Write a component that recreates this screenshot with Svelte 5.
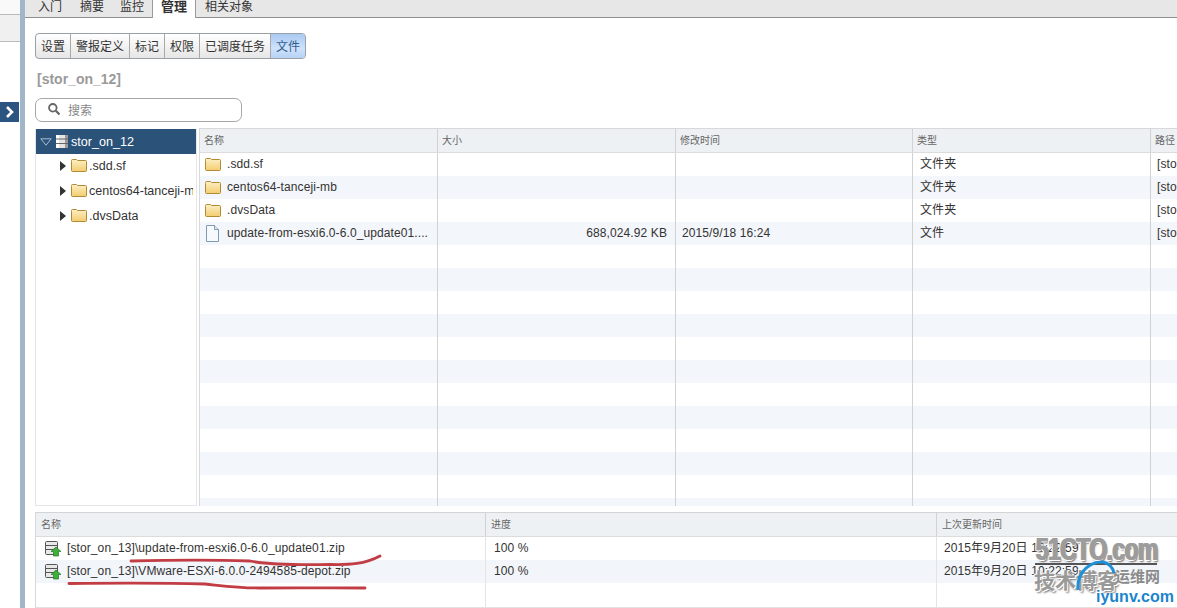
<script>
  const tabs = [
    { label: '入门' }, { label: '摘要' }, { label: '监控' },
    { label: '管理', active: true }, { label: '相关对象' }
  ];
  const segs = ['设置', '警报定义', '标记', '权限', '已调度任务', '文件'];
  const tree = ['.sdd.sf', 'centos64-tanceji-mb', '.dvsData'];
  const files = [
    { name: '.sdd.sf', size: '', time: '', type: '文件夹', folder: true },
    { name: 'centos64-tanceji-mb', size: '', time: '', type: '文件夹', folder: true },
    { name: '.dvsData', size: '', time: '', type: '文件夹', folder: true },
    { name: 'update-from-esxi6.0-6.0_update01....', size: '688,024.92 KB', time: '2015/9/18 16:24', type: '文件', folder: false }
  ];
  const rows = Array.from({ length: 16 }, (_, i) => files[i] ?? null);
  const tasks = [
    '[stor_on_13]\\update-from-esxi6.0-6.0_update01.zip',
    '[stor_on_13]\\VMware-ESXi-6.0.0-2494585-depot.zip'
  ];
</script>

{#snippet folder()}
  <svg class="ico" width="18" height="15" viewBox="0 0 18 15">
    <defs><linearGradient id="fg" x1="0" y1="0" x2="0" y2="1"><stop offset="0" stop-color="#fdf0c4"/><stop offset="1" stop-color="#f3cd70"/></linearGradient></defs>
    <path d="M1.5 3.5 V12.5 Q1.5 13.5 2.5 13.5 H15.5 Q16.5 13.5 16.5 12.5 V3.5 Q16.5 2.5 15.5 2.5 H7.5 L6.5 1.5 H2.5 Q1.5 1.5 1.5 2.5 Z" fill="url(#fg)" stroke="#b08a34"/>
  </svg>
{/snippet}

{#snippet fileIcon()}
  <svg class="ico" width="18" height="17" viewBox="0 0 18 17">
    <path d="M2.5 .5 H10.5 L14.5 4.5 V16.5 H2.5 Z" fill="#f7fafd" stroke="#7f9ab5"/>
    <path d="M10.5 .5 V4.5 H14.5" fill="#dfe8f1" stroke="#7f9ab5"/>
  </svg>
{/snippet}

{#snippet taskIcon()}
  <svg class="ico" width="18" height="17" viewBox="0 0 18 17">
    <rect x="1.5" y="1.5" width="12" height="13" rx="1" fill="#e8e8e8" stroke="#555"/>
    <path d="M2 5.5 H13 M2 9.5 H13" stroke="#555"/>
    <path d="M12 7 L17 11.500 H14.500 V16 H9.500 V11.500 H7 Z" fill="#3fae3a" stroke="#1f7a22" stroke-width=".7"/>
  </svg>
{/snippet}

<div class="page">
  <aside class="rail">
    <div class="rail-top"></div>
    <div class="rail-mid"></div>
    <button class="expand" aria-label="展开">
      <svg width="10" height="12" viewBox="0 0 10 12"><path d="M2 1 L7 6 L2 11" fill="none" stroke="#fff" stroke-width="2.6"/></svg>
    </button>
  </aside>
  <div class="stripe"></div>

  <main class="main">
    <nav class="tabs">
      {#each tabs as t}
        <span class="tab" class:active={t.active}>{t.label}</span>
      {/each}
    </nav>

    <div class="content">
      <div class="segs">
        {#each segs as s, i}
          <span class="seg" class:on={i === 5}>{s}</span>
        {/each}
      </div>

      <h1 class="title">[stor_on_12]</h1>

      <div class="search">
        <svg width="14" height="14" viewBox="0 0 14 14"><circle cx="5.8" cy="5.8" r="3.8" fill="none" stroke="#666" stroke-width="1.8"/><path d="M8.8 8.8 L12.5 12.5" stroke="#666" stroke-width="2.2"/></svg>
        <span>搜索</span>
      </div>

      <div class="browser">
        <div class="tree">
          <div class="root">
            <svg width="12" height="8" viewBox="0 0 12 8"><path d="M.8 .8 H11.2 L6 7.2 Z" fill="none" stroke="#a9bdd2"/></svg>
            <svg width="14" height="15" viewBox="0 0 14 15">
              <rect x="1" y="1" width="12" height="13" fill="#e4e4e4"/>
              <rect x="1" y="1" width="3" height="13" fill="#fff"/>
              <rect x="10" y="1" width="3" height="13" fill="#9a9a9a"/>
              <path d="M1 5 H13 M1 9.5 H13" stroke="#666"/>
            </svg>
            <span>stor_on_12</span>
          </div>
          {#each tree as n}
            <div class="node">
              <svg class="arrow" width="6" height="10" viewBox="0 0 6 10"><path d="M0 0 L6 5 L0 10 Z" fill="#333"/></svg>
              {@render folder()}
              <span>{n}</span>
            </div>
          {/each}
        </div>

        <div class="table">
          <div class="thead">
            <div>名称</div><div>大小</div><div>修改时间</div><div>类型</div><div>路径</div>
          </div>
          <div class="tbody">
            {#each rows as r}
              <div class="row">
                <div class="namecell">
                  {#if r}
                    {#if r.folder}{@render folder()}{:else}{@render fileIcon()}{/if}
                    <span>{r.name}</span>
                  {/if}
                </div>
                <div class="size">{r?.size ?? ''}</div>
                <div>{r?.time ?? ''}</div>
                <div>{r?.type ?? ''}</div>
                <div>{r ? '[stor_on_12]' : ''}</div>
              </div>
            {/each}
          </div>
        </div>
      </div>

      <section class="tasks">
        <div class="thead2">
          <div>名称</div><div>进度</div><div>上次更新时间</div>
        </div>
        {#each tasks as t}
          <div class="trow">
            <div class="tname">{@render taskIcon()}<span>{t}</span></div>
            <div>100 %</div>
            <div>2015年9月20日 10:22:59</div>
          </div>
        {/each}
        <div class="trow filler"><div></div><div></div><div></div></div>
      </section>
    </div>
  </main>

  <svg class="ink" width="1177" height="608" viewBox="0 0 1177 608" aria-hidden="true">
    <path d="M131 561 C170 560 220 560 250 561 C270 565 300 565 330 564.500 C350 565 365 564 380 556" fill="none" stroke="#c23c44" stroke-width="2.800" stroke-linecap="round"/>
    <path d="M69 583.500 C110 583 170 583 205 584 C225 586 240 588 260 588 C300 588 335 587.500 365 588" fill="none" stroke="#c23c44" stroke-width="2.800" stroke-linecap="round"/>
  </svg>

  <div class="wm" aria-hidden="true">
    <div class="wm-a">51CTO.com</div>
    <div class="wm-bar"></div>
    <div class="wm-b">技术博客</div>
    <div class="wm-c">运维网</div>
    <svg class="wm-arc" width="60" height="50" viewBox="0 0 60 50"><path d="M5 32 C3 12 20 3 30 4 C36 5 40 10 41 15" fill="none" stroke="#1f8fd6" stroke-width="3"/></svg>
    <div class="wm-d">iyunv.com</div>
  </div>
</div>

<style>
  :global(body) { margin: 0; background: #fff; }
  .page {
    position: relative;
    display: flex;
    width: 1177px;
    height: 608px;
    overflow: hidden;
    font: 12px "Liberation Sans", "Noto Sans CJK SC", sans-serif;
    color: #333;
  }
  .rail { width: 20px; flex: none; background: #fff; }
  .rail-top { height: 14px; background: #f9f9f9; border-bottom: 1px solid #bbb; }
  .rail-mid { height: 26px; background: #f0f0f0; border-bottom: 1px solid #bbb; }
  .expand {
    display: flex; align-items: center; justify-content: center;
    width: 19px; height: 20px; margin-top: 60px; padding: 0;
    border: 0; background: #2b5580;
  }
  .stripe { width: 5px; flex: none; background: #a2b6ca; }
  .main { flex: 1; min-width: 0; display: flex; flex-direction: column; }

  .tabs {
    display: flex; height: 17px; flex: none;
    padding-left: 4px;
    background: #e7e7e7;
    border-bottom: 1px solid #8e8e8e;
  }
  .tab {
    padding: 0 9px;
    margin-top: -3px;
    line-height: 20px;
    font-size: 12px;
    white-space: nowrap;
  }
  .tab:nth-child(3) { margin-left: -2px; }
  .tab.active {
    margin: -3px 0 -1px -1px;
    padding: 0 8px;
    height: 21px;
    background: #fff;
    border-left: 1px solid #9a9a9a;
    border-right: 1px solid #9a9a9a;
    font-weight: bold;
    font-size: 13px;
  }
  .content { padding: 15px 0 0 10px; display: flex; flex-direction: column; align-items: flex-start; }

  .segs {
    display: flex; height: 24px;
    border: 1px solid #9aa0a6; border-radius: 4px;
    overflow: hidden;
    background: linear-gradient(#fff, #e6e6e6);
  }
  .seg { padding: 0 5px; line-height: 26px; border-left: 1px solid #a8a8a8; color: #333; white-space: nowrap; }
  .seg:first-child { border-left: 0; }
  .seg.on { background: linear-gradient(#a9c9f2, #cfe2fb 60%, #b6d2f6); color: #2f5f90; }

  .title { margin: 11px 0 0 2px; height: 18px; font-size: 14px; line-height: 18px; font-weight: bold; color: #9a9a9a; }

  .search {
    box-sizing: border-box;
    display: flex; align-items: center; gap: 7px;
    width: 207px; height: 24px; margin-top: 10px;
    padding: 0 0 2px 11px;
    border: 1px solid #a6a6a6; border-radius: 7px;
    color: #888;
  }

  .browser { display: flex; gap: 2px; margin-top: 6px; width: 1142px; height: 378px; }
  .tree {
    box-sizing: border-box;
    width: 162px; height: 377px; flex: none; margin-top: 1px; padding-left: 1px;
    border-right: 1px solid #e6e6e6; border-bottom: 1px solid #e6e6e6; border-left: 1px solid #e6e6e6;
    overflow: hidden;
  }
  .root {
    display: flex; align-items: center; gap: 3px;
    height: 25px; padding-left: 4px;
    margin: 0 0 -1px -1px;
    background: #2b5278; color: #fff; font-size: 12.6px;
  }
  .root span { margin-left: -1px; }
  .node {
    box-sizing: border-box;
    display: flex; align-items: center;
    height: 25px; padding: 0 3px 0 23px;
    white-space: nowrap; font-size: 12.5px;
  }
  .node .arrow { margin-right: 4px; flex: none; }
  .node span { color: #333; margin-left: 1px; min-width: 0; overflow: hidden; }
  .ico { flex: none; }

  .table { flex: 1; min-width: 0; border-top: 1px solid #d8d8d8; border-left: 1px solid #d8d8d8; }
  .thead, .row {
    display: grid;
    grid-template-columns: 238px 238px 237px 238px 1fr;
  }
  .thead {
    height: 23px; line-height: 23px;
    background: #eef1f4;
    border-bottom: 1px solid #dcdcdc;
    font-size: 10px; color: #666;
  }
  .thead > div { padding-left: 4px; border-right: 1px solid #d2d2d2; white-space: nowrap; }
  .thead > div:last-child { border-right: 0; }
  .tbody { height: 353px; overflow: hidden; }
  .row { height: 23px; line-height: 23px; letter-spacing: .1px; }
  .row:nth-child(even) { background: #f3f6fa; }
  .row > div { padding-left: 6px; border-right: 1px solid #d2d2d2; white-space: nowrap; overflow: hidden; }
  .row > div:last-child { border-right: 0; padding-left: 6px; }
  .row > div:nth-child(4) { padding-left: 7px; }
  .namecell { display: flex; align-items: center; gap: 5px; padding-left: 4px !important; }
  .row > .size { text-align: right; padding-right: 8px; }

  .tasks {
    width: 1142px; margin-top: 6px;
    border-top: 1px solid #d4d4d4; border-left: 1px solid #d8d8d8;
  }
  .thead2, .trow {
    display: grid;
    grid-template-columns: 450px 451px 1fr;
  }
  .thead2 {
    height: 23px; line-height: 23px;
    background: #eef1f4;
    border-bottom: 1px solid #dcdcdc;
    font-size: 10px; color: #666;
  }
  .thead2 > div { padding-left: 5px; border-right: 1px solid #d2d2d2; }
  .thead2 > div:last-child { border-right: 0; }
  .trow { height: 23px; line-height: 23px; letter-spacing: .1px; }
  .trow:nth-child(3) { background: #f2f5f9; }
  .trow > div { padding-left: 8px; border-right: 1px solid #e4e4e4; white-space: nowrap; overflow: hidden; }
  .trow > div:last-child { border-right: 0; padding-left: 7px; }
  .tname { display: flex; align-items: center; gap: 5px; }
  .filler { height: 24px; border-bottom: 1px solid #e2e2e2; }

  .ink { position: absolute; left: 0; top: 0; pointer-events: none; }

  .wm { position: absolute; left: 1030px; top: 530px; width: 147px; height: 78px; }
  .wm > * { position: absolute; }
  .wm-a {
    left: 5px; top: 2px;
    font: bold 31px "Liberation Sans", sans-serif;
    letter-spacing: -1px; color: #9c9c9c;
    transform: scaleX(.75); transform-origin: left;
    text-shadow: 2px 0 0 #9c9c9c, 1px 1px 0 #fff, -1px -1px 0 #fff, 1px -1px 0 #fff, -1px 1px 0 #fff, 2px 2px 2px #666;
    white-space: nowrap;
  }
  .wm-bar { left: 5px; top: 33px; width: 122px; height: 2px; background: #555; }
  .wm-b {
    left: 4px; top: 34px;
    font: bold 21px "Noto Sans CJK SC", sans-serif; color: #999;
    text-shadow: 1px 1px 0 #fff, -1px -1px 0 #fff, 2px 2px 2px #777;
    white-space: nowrap;
  }
  .wm-c { left: 85px; top: 35px; font: bold 15px "Noto Sans CJK SC", sans-serif; color: #8a8a8a; text-shadow: 1px 1px 1px #fff; white-space: nowrap; }
  .wm-arc { left: 43px; top: 28px; }
  .wm-d { left: 66px; top: 58px; font: bold 16px "Liberation Sans", sans-serif; color: #1c84cc; white-space: nowrap; text-shadow: 0 0 1px #fff; }
</style>
